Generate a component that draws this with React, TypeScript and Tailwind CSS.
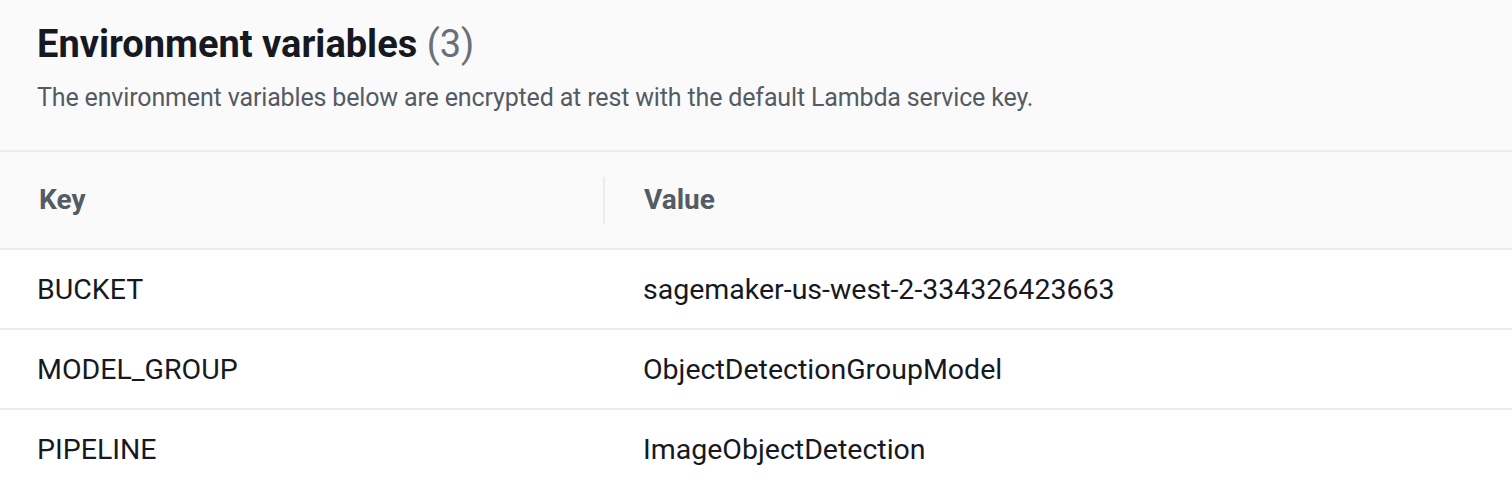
import React from "react";

const rows = [
  { key: "BUCKET", value: "sagemaker-us-west-2-334326423663" },
  { key: "MODEL_GROUP", value: "ObjectDetectionGroupModel" },
  { key: "PIPELINE", value: "ImageObjectDetection" },
];

export default function App() {
  return (
    <div className="w-[1512px] h-[480px] overflow-hidden bg-white font-['Roboto',sans-serif]">
      <div className="h-[152px] bg-[#fafafa] border-b-2 border-[#eaeded] pl-[37px] pt-[22px]">
        <h2 className="text-[38px] leading-[44px] font-bold text-[#16191f]">
          Environment variables <span className="font-normal text-[#687078]">(3)</span>
        </h2>
        <p className="mt-[15px] text-[25px] leading-[34px] tracking-[-0.15px] text-[#545b64]">
          The environment variables below are encrypted at rest with the default Lambda service key.
        </p>
      </div>
      <div className="grid grid-cols-[603px_1fr] h-[98px] bg-[#fafafa] border-b-2 border-[#eaeded] items-center">
        <div className="pl-[39px] text-[28px] font-bold text-[#545b64]">Key</div>
        <div className="flex items-center h-[47px] border-l-2 border-[#eaeded] pl-[39px] text-[28px] font-bold text-[#545b64]">
          Value
        </div>
      </div>
      {rows.map((r) => (
        <div
          key={r.key}
          className="grid grid-cols-[603px_1fr] h-[80px] border-b-2 border-[#eaeded] items-center text-[28.5px] text-[#16191f]"
        >
          <div className="pl-[37px] pt-[2px]">{r.key}</div>
          <div className="pl-[40px] pt-[2px]">{r.value}</div>
        </div>
      ))}
    </div>
  );
}
